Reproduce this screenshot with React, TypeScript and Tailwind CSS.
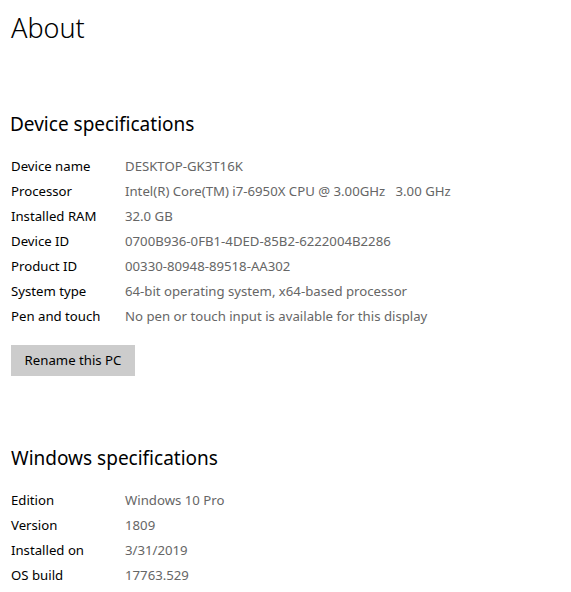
const deviceSpecs: [string, string][] = [
  ['Device name', 'DESKTOP-GK3T16K'],
  ['Processor', 'Intel(R) Core(TM) i7-6950X CPU @ 3.00GHz   3.00 GHz'],
  ['Installed RAM', '32.0 GB'],
  ['Device ID', '0700B936-0FB1-4DED-85B2-6222004B2286'],
  ['Product ID', '00330-80948-89518-AA302'],
  ['System type', '64-bit operating system, x64-based processor'],
  ['Pen and touch', 'No pen or touch input is available for this display'],
];

const windowsSpecs: [string, string][] = [
  ['Edition', 'Windows 10 Pro'],
  ['Version', '1809'],
  ['Installed on', '3/31/2019'],
  ['OS build', '17763.529'],
];

const SpecRows = ({ rows }: { rows: [string, string][] }) => (
  <div className="flex flex-col">
    {rows.map(([label, value]) => (
      <div key={label} className="flex h-[25px] items-center text-[13.2px]">
        <span className="w-[114px] shrink-0 text-black">{label}</span>
        <span className="whitespace-pre text-[#666666]">{value}</span>
      </div>
    ))}
  </div>
);

export default function App() {
  return (
    <div className="min-h-[592px] bg-white pl-[11px] font-['Noto_Sans',sans-serif] text-black">
      <h1 className="pt-[8px] text-[27px] font-light leading-[40px]">About</h1>

      <h2 className="mt-[62px] -ml-[1px] text-[19px] leading-[28px]">Device specifications</h2>
      <div className="mt-[16px]">
        <SpecRows rows={deviceSpecs} />
      </div>

      <button className="mt-[16px] h-[31px] w-[124px] bg-[#cccccc] text-[13.2px] text-black">
        Rename this PC
      </button>

      <h2 className="mt-[68px] text-[19px] leading-[28px]">Windows specifications</h2>
      <div className="mt-[16px]">
        <SpecRows rows={windowsSpecs} />
      </div>
    </div>
  );
}
